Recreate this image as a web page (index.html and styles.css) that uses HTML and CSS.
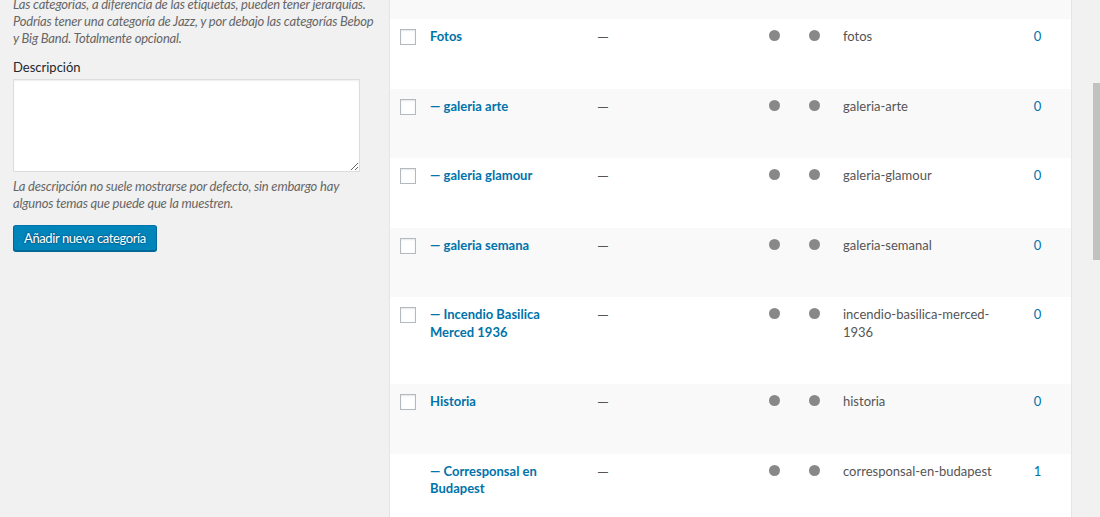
FILE: index.html
```html
<!DOCTYPE html>
<html lang="es">
<head>
<meta charset="UTF-8">
<meta name="viewport" content="width=device-width, initial-scale=1.0">
<title>Categorías</title>
<link rel="stylesheet" href="styles.css">
</head>
<body>
  <div class="wrap">
    <div class="col-left">
      <p class="description first">Las categorías, a diferencia de las etiquetas, pueden tener jerarquías. Podrías tener una categoría de Jazz, y por debajo las categorías Bebop y Big Band. Totalmente opcional.</p>

      <div class="form-field">
        <label for="tag-description">Descripción</label>
        <textarea id="tag-description" rows="5"></textarea>
        <p class="description">La descripción no suele mostrarse por defecto, sin embargo hay algunos temas que puede que la muestren.</p>
      </div>

      <button class="button-primary" type="button">Añadir nueva categoría</button>
    </div>

    <div class="col-right">
      <table class="list-table">
        <colgroup>
          <col class="c-check">
          <col class="c-name">
          <col class="c-desc">
          <col class="c-dot1">
          <col class="c-dot2">
          <col class="c-slug">
          <col class="c-count">
        </colgroup>
        <tbody>
          <tr class="cut"><td colspan="7"></td></tr>
          <tr>
            <td class="check"><input type="checkbox"></td>
            <td class="name"><a href="#">Fotos</a></td>
            <td class="desc">—</td>
            <td class="dot-cell"><span class="dot"></span></td>
            <td class="dot-cell"><span class="dot"></span></td>
            <td class="slug">fotos</td>
            <td class="count"><a href="#">0</a></td>
          </tr>
          <tr>
            <td class="check"><input type="checkbox"></td>
            <td class="name"><a href="#">— galeria arte</a></td>
            <td class="desc">—</td>
            <td class="dot-cell"><span class="dot"></span></td>
            <td class="dot-cell"><span class="dot"></span></td>
            <td class="slug">galeria-arte</td>
            <td class="count"><a href="#">0</a></td>
          </tr>
          <tr>
            <td class="check"><input type="checkbox"></td>
            <td class="name"><a href="#">— galeria glamour</a></td>
            <td class="desc">—</td>
            <td class="dot-cell"><span class="dot"></span></td>
            <td class="dot-cell"><span class="dot"></span></td>
            <td class="slug">galeria-glamour</td>
            <td class="count"><a href="#">0</a></td>
          </tr>
          <tr>
            <td class="check"><input type="checkbox"></td>
            <td class="name"><a href="#">— galeria semana</a></td>
            <td class="desc">—</td>
            <td class="dot-cell"><span class="dot"></span></td>
            <td class="dot-cell"><span class="dot"></span></td>
            <td class="slug">galeria-semanal</td>
            <td class="count"><a href="#">0</a></td>
          </tr>
          <tr>
            <td class="check"><input type="checkbox"></td>
            <td class="name"><a href="#">— Incendio Basilica Merced 1936</a></td>
            <td class="desc">—</td>
            <td class="dot-cell"><span class="dot"></span></td>
            <td class="dot-cell"><span class="dot"></span></td>
            <td class="slug">incendio-basilica-merced-1936</td>
            <td class="count"><a href="#">0</a></td>
          </tr>
          <tr>
            <td class="check"><input type="checkbox"></td>
            <td class="name"><a href="#">Historia</a></td>
            <td class="desc">—</td>
            <td class="dot-cell"><span class="dot"></span></td>
            <td class="dot-cell"><span class="dot"></span></td>
            <td class="slug">historia</td>
            <td class="count"><a href="#">0</a></td>
          </tr>
          <tr>
            <td class="check"></td>
            <td class="name"><a href="#">— Corresponsal en Budapest</a></td>
            <td class="desc">—</td>
            <td class="dot-cell"><span class="dot"></span></td>
            <td class="dot-cell"><span class="dot"></span></td>
            <td class="slug">corresponsal-en-budapest</td>
            <td class="count"><a href="#">1</a></td>
          </tr>
        </tbody>
      </table>
    </div>
  </div>

  <div class="scrollbar"><div class="thumb"></div></div>
</body>
</html>
```

FILE: styles.css
```css
* {
  margin: 0;
  padding: 0;
  box-sizing: border-box;
}

html,
body {
  height: 100%;
  overflow: hidden;
}

body {
  font-family: Lato, "Noto Sans", sans-serif;
  font-size: 13px;
  line-height: 17px;
  color: #444;
  background-color: #f1f1f1;
}

a {
  color: #0073aa;
  text-decoration: none;
}

.wrap {
  display: flex;
  align-items: flex-start;
  padding-left: 13px;
}

/* Left column: add category form */
.col-left {
  width: 364px;
  flex-shrink: 0;
}

.description {
  font-style: italic;
  color: #666;
  letter-spacing: -0.2px;
}

.description.first {
  margin-top: -4px;
}

.form-field {
  margin-top: 12px;
}

.form-field label {
  display: block;
  color: #23282d;
}

.form-field textarea {
  display: block;
  width: 347px;
  height: 93px;
  margin-top: 3px;
  border: 1px solid #ddd;
  background-color: #fff;
  box-shadow: inset 0 1px 2px rgba(0, 0, 0, 0.07);
  font-family: inherit;
  font-size: 13px;
}

.form-field .description {
  margin-top: 6px;
}

.button-primary {
  margin-top: 13px;
  height: 26px;
  padding: 0 10px;
  font-family: inherit;
  font-size: 13px;
  line-height: 24px;
  letter-spacing: -0.4px;
  color: #fff;
  background-color: #0085ba;
  border: 1px solid;
  border-color: #0073aa #006799 #006799;
  border-radius: 3px;
  box-shadow: 0 1px 0 #006799;
  text-shadow: 0 -1px 1px #006799, 1px 0 1px #006799, 0 1px 1px #006799, -1px 0 1px #006799;
  cursor: pointer;
}

/* Right column: categories table */
.col-right {
  margin-left: 12px;
}

.list-table {
  width: 683px;
  table-layout: fixed;
  border-collapse: separate;
  border-spacing: 0;
  background-color: #fff;
  border: 1px solid #e5e5e5;
  border-top: none;
  box-shadow: 0 1px 1px rgba(0, 0, 0, 0.04);
}

.c-check { width: 30px; }
.c-name { width: 167px; }
.c-desc { width: 172px; }
.c-dot1 { width: 40px; }
.c-dot2 { width: 34px; }
.c-slug { width: 171px; }
.c-count { width: 67px; }

.list-table tr:nth-child(odd) {
  background-color: #f9f9f9;
}

.list-table tr.cut td {
  height: 19px;
  padding: 0;
}

.list-table td {
  vertical-align: top;
  padding: 9px 10px 43px;
  line-height: 17.5px;
  color: #555;
}

.list-table td.check {
  padding-left: 10px;
  padding-right: 0;
}

.check input {
  display: block;
  appearance: none;
  width: 16px;
  height: 16px;
  margin-top: 1px;
  border: 1px solid #b4b9be;
  background-color: #fff;
  box-shadow: inset 0 1px 2px rgba(0, 0, 0, 0.1);
}

.name a {
  font-weight: 700;
}

.desc {
  font-size: 15px;
}

.dot-cell .dot {
  display: block;
  width: 11px;
  height: 11px;
  margin-top: 2px;
  border-radius: 50%;
  background-color: #888;
}

.dot-cell {
  padding-right: 0;
}

.list-table td.count {
  text-align: center;
  padding-left: 0;
  padding-right: 0;
}

/* Window scrollbar */
.scrollbar {
  position: fixed;
  top: 0;
  right: 0;
  width: 7px;
  height: 100%;
  background-color: #f1f1f1;
}

.scrollbar .thumb {
  margin-top: 83px;
  height: 177px;
  background-color: #c1c1c1;
}
```
